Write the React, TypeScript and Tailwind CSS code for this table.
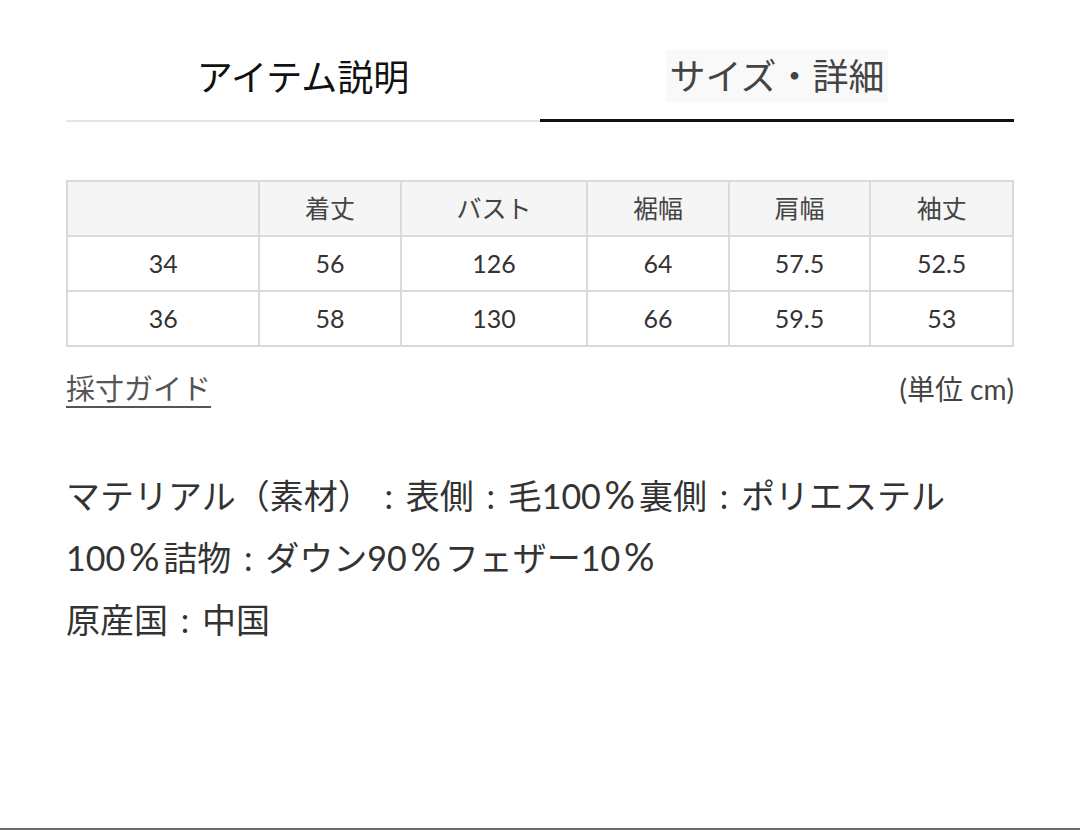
import React from 'react';

const headers = ['', '着丈', 'バスト', '裾幅', '肩幅', '袖丈'];
const rows = [
  ['34', '56', '126', '64', '57.5', '52.5'],
  ['36', '58', '130', '66', '59.5', '53'],
];
const colWidths = ['w-[193px]', 'w-[142px]', 'w-[187px]', 'w-[142px]', 'w-[142px]', 'w-[143px]'];

const Pct = () => (
  <span className="inline-block w-[1em] text-center text-[1.12em] leading-none font-['Lato',sans-serif]">%</span>
);

// full-width colon / percent drawn in a 1em box so they keep their spacing
const Mixed = ({ text }: { text: string }) => (
  <>
    {text.split(/([0-9.]+％?|：)/).map((part, i) => {
      if (part === '：') return <span key={i} className="inline-block w-[1em] text-center">:</span>;
      if (/^[0-9.]+％?$/.test(part)) {
        const num = part.replace('％', '');
        return (
          <span key={i} className="whitespace-nowrap font-['Lato',sans-serif]">
            {num}
            {part.endsWith('％') && <Pct />}
          </span>
        );
      }
      return <span key={i} className="font-['Noto_Sans_CJK_JP',sans-serif]">{part}</span>;
    })}
  </>
);

export default function App() {
  return (
    <div className="w-[1080px] h-[830px] bg-white flex flex-col font-['Lato','Noto_Sans_CJK_JP',sans-serif] text-[#333] [text-spacing-trim:space-all]">
      <div className="flex-1 px-[66px]">
        {/* tabs */}
        <div className="flex items-end">
          <div className="flex-1 flex justify-center pt-[50px] pb-[17px] border-b-2 border-[#e6e6e6]">
            <span className="text-[36px] leading-[52px] text-[#111]">アイテム説明</span>
          </div>
          <div className="flex-1 flex justify-center pt-[50px] pb-[17px] border-b-[3px] border-[#111]">
            <span className="text-[36px] leading-[52px] text-[#444] bg-[#f9f9f9] px-1">サイズ・詳細</span>
          </div>
        </div>

        {/* size table */}
        <table className="mt-[58px] w-full border-collapse border-2 border-[#dadada] text-[25px] text-center">
          <thead>
            <tr className="bg-[#f5f5f5] h-[55px]">
              {headers.map((h, i) => (
                <th key={i} className={`${colWidths[i]} border-2 border-[#dadada] font-normal text-[#444]`}>{h}</th>
              ))}
            </tr>
          </thead>
          <tbody>
            {rows.map((r, ri) => (
              <tr key={ri} className="h-[55px]">
                {r.map((c, ci) => (
                  <td key={ci} className="border-2 border-[#dadada] text-[#333]">{c}</td>
                ))}
              </tr>
            ))}
          </tbody>
        </table>

        <div className="flex justify-between items-center mt-[20px]">
          <a href="#" className="text-[29px] text-[#555] underline underline-offset-[6px] decoration-2">採寸ガイド</a>
          <span className="text-[28px] text-[#444]">(単位 cm)</span>
        </div>

        <p className="mt-[53px] text-[34px] leading-[61px] text-[#333]">
          <Mixed text="マテリアル（素材）：表側：毛100％裏側：ポリエステル100％詰物：ダウン90％フェザー10％" />
          <br />
          <Mixed text="原産国：中国" />
        </p>
      </div>
      <div className="h-[2px] bg-[#6b6b6b]" />
    </div>
  );
}
